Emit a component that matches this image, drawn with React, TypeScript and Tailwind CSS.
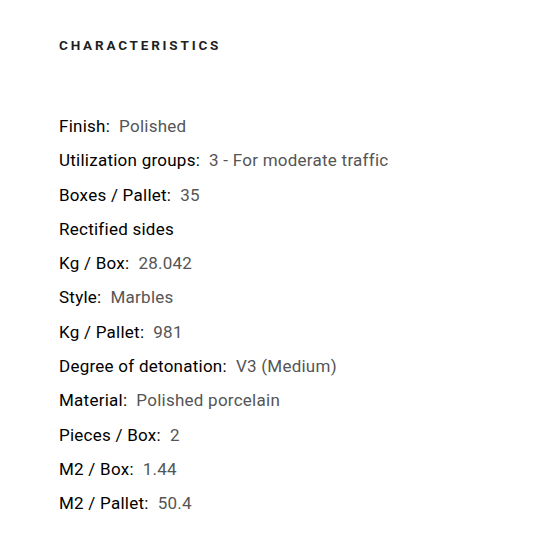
const ROWS: { label: string; value?: string }[] = [
  { label: "Finish", value: "Polished" },
  { label: "Utilization groups", value: "3 - For moderate traffic" },
  { label: "Boxes / Pallet", value: "35" },
  { label: "Rectified sides" },
  { label: "Kg / Box", value: "28.042" },
  { label: "Style", value: "Marbles" },
  { label: "Kg / Pallet", value: "981" },
  { label: "Degree of detonation", value: "V3 (Medium)" },
  { label: "Material", value: "Polished porcelain" },
  { label: "Pieces / Box", value: "2" },
  { label: "M2 / Box", value: "1.44" },
  { label: "M2 / Pallet", value: "50.4" },
];

export default function App() {
  return (
    <div
      className="w-[550px] h-[550px] bg-white px-[59px] pt-[37px]"
      style={{ fontFamily: "Roboto, 'Liberation Sans', sans-serif" }}
    >
      <h2 className="text-[13.5px] font-bold tracking-[2.8px] text-[#1f1f1f] leading-[16px]">
        CHARACTERISTICS
      </h2>
      <ul className="mt-[61px] flex flex-col">
        {ROWS.map((row) => (
          <li
            key={row.label}
            className="text-[17px] leading-[24px] tracking-[0.25px] h-[34.3px] whitespace-nowrap"
          >
            <span className="font-normal text-[#000]">
              {row.label}
              {row.value !== undefined && ":"}
            </span>
            {row.value !== undefined && (
              <span className="ml-[9px] font-normal text-[#555]">{row.value}</span>
            )}
          </li>
        ))}
      </ul>
    </div>
  );
}
